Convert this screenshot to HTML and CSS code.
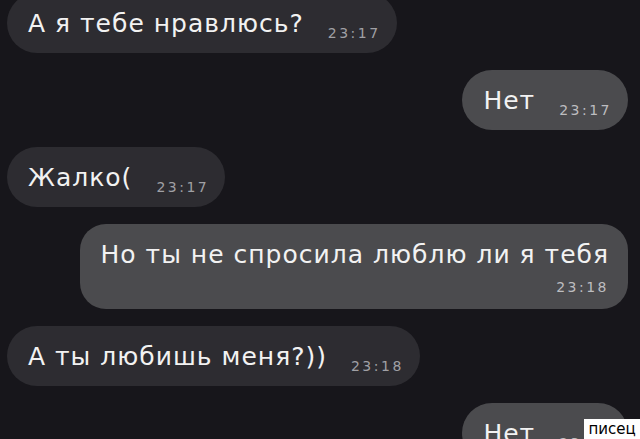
FILE: index.html
```html
<!DOCTYPE html>
<html lang="ru">
<head>
  <meta charset="UTF-8" />
  <meta name="viewport" content="width=device-width, initial-scale=1.0"/>
  <title>Чат</title>
  <link rel="stylesheet" href="styles.css">
</head>
<body>

<main class="chat">
  <div class="msg in">
    <span class="text">А я тебе нравлюсь?</span>
    <span class="time">23:17</span>
  </div>
  <div class="msg out">
    <span class="text">Нет</span>
    <span class="time">23:17</span>
  </div>
  <div class="msg in">
    <span class="text">Жалко(</span>
    <span class="time">23:17</span>
  </div>
  <div class="msg out long">
    <span class="text">Но ты не спросила люблю ли я тебя</span>
    <span class="time">23:18</span>
  </div>
  <div class="msg in">
    <span class="text">А ты любишь меня?))</span>
    <span class="time">23:18</span>
  </div>
  <div class="msg out">
    <span class="text">Нет</span>
    <span class="time">23:18</span>
  </div>
</main>

<div class="watermark">писец</div>

</body>
</html>
```

FILE: styles.css
```css
body {
  margin: 0;
  height: 439px;
  overflow: hidden;
  background: #17161b;
  font-family: "DejaVu Sans", "Liberation Sans", sans-serif;
  color: #f2f2f2;
}
.chat {
  display: flex;
  flex-direction: column;
  gap: 17px;
  padding: 0 12px 0 7px;
  margin-top: -7px;
}
.msg {
  display: flex;
  align-items: baseline;
  gap: 24px;
  padding: 17px 16px 15px 21px;
  border-radius: 30px;
  line-height: 28px;
}
.msg.in {
  align-self: flex-start;
  background: #2d2c31;
}
.msg.out {
  align-self: flex-end;
  background: #4b4b4e;
}
.text {
  font-size: 25px;
  letter-spacing: 1px;
}
.time {
  font-size: 14px;
  line-height: 1;
  letter-spacing: 2.5px;
  color: #a0a0a5;
  position: relative;
  top: 6px;
}
.out .time {
  color: #bdbdc0;
}
.msg.long {
  flex-direction: column;
  align-items: flex-end;
  gap: 0;
  padding: 17px 19px 14px 21px;
  border-radius: 26px;
}
.msg.long .time {
  top: 0;
  margin-top: 10px;
  line-height: 16px;
}
.watermark {
  position: fixed;
  right: 0;
  bottom: 0;
  width: 56px;
  height: 20px;
  background: #fff;
  color: #000;
  font-size: 15px;
  line-height: 20px;
  text-align: center;
}
```
